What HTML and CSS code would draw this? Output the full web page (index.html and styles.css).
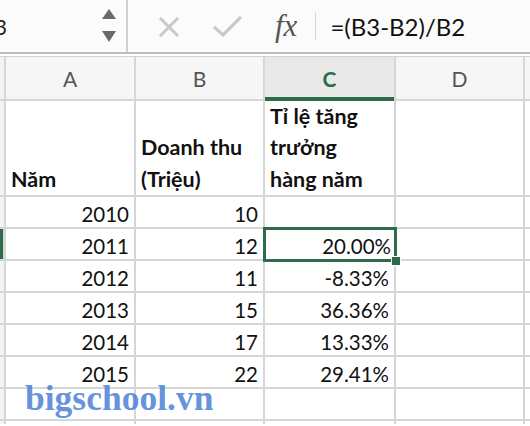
FILE: index.html
```html
<!doctype html>
<html>
  <head>
    <meta charset="utf-8">
    <link rel="stylesheet" href="styles.css">
  </head>
  <body>
    <div class="toolbar">
      <div class="name-box">
        <span class="ref">B3</span>
        <svg class="spin" width="14" height="34" viewBox="0 0 14 34">
          <path d="M7 0 L14 10 L0 10 Z" fill="#6a6a6a"/>
          <path d="M0 22 L14 22 L7 33 Z" fill="#6a6a6a"/>
        </svg>
      </div>
      <div class="actions">
        <svg class="cancel" width="22" height="20" viewBox="0 0 22 20">
          <path d="M2 1 L20 19 M20 1 L2 19" stroke="#c9c9c9" stroke-width="3" fill="none"/>
        </svg>
        <svg class="enter" width="29" height="21" viewBox="0 0 29 21">
          <path d="M1 11 L10 19 L28 1" stroke="#c9c9c9" stroke-width="3.2" fill="none"/>
        </svg>
        <span class="fx">fx</span>
      </div>
      <div class="formula">=(B3-B2)/B2</div>
    </div>
    <div class="toolbar-rule"></div>

    <div class="sheet">
      <div class="rh corner"></div>
      <div class="ch">A</div>
      <div class="ch">B</div>
      <div class="ch active">C</div>
      <div class="ch">D</div>
      <div class="ch"></div>

      <div class="rh"></div>
      <div class="cell head">Năm</div>
      <div class="cell head">Doanh thu<br>(Triệu)</div>
      <div class="cell head">Tỉ lệ tăng<br>trưởng<br>hàng năm</div>
      <div class="cell"></div>
      <div class="cell"></div>

      <div class="rh"></div>
      <div class="cell num">2010</div>
      <div class="cell num">10</div>
      <div class="cell num"></div>
      <div class="cell"></div>
      <div class="cell"></div>

      <div class="rh active"></div>
      <div class="cell num">2011</div>
      <div class="cell num">12</div>
      <div class="cell num selected">20.00%</div>
      <div class="cell"></div>
      <div class="cell"></div>

      <div class="rh"></div>
      <div class="cell num">2012</div>
      <div class="cell num">11</div>
      <div class="cell num">-8.33%</div>
      <div class="cell"></div>
      <div class="cell"></div>

      <div class="rh"></div>
      <div class="cell num">2013</div>
      <div class="cell num">15</div>
      <div class="cell num">36.36%</div>
      <div class="cell"></div>
      <div class="cell"></div>

      <div class="rh"></div>
      <div class="cell num">2014</div>
      <div class="cell num">17</div>
      <div class="cell num">13.33%</div>
      <div class="cell"></div>
      <div class="cell"></div>

      <div class="rh"></div>
      <div class="cell num">2015</div>
      <div class="cell num">22</div>
      <div class="cell num">29.41%</div>
      <div class="cell"></div>
      <div class="cell"></div>

      <div class="rh"></div>
      <div class="cell"></div>
      <div class="cell"></div>
      <div class="cell"></div>
      <div class="cell"></div>
      <div class="cell"></div>

      <div class="rh"></div>
      <div class="cell"></div>
      <div class="cell"></div>
      <div class="cell"></div>
      <div class="cell"></div>
      <div class="cell"></div>
    </div>

    <div class="watermark">bigschool.vn</div>
  </body>
</html>
```

FILE: styles.css
```css
html, body {
  margin: 0;
  padding: 0;
  width: 100%;
  height: 100%;
  overflow: hidden;
  background: #fff;
  font-family: Lato, "Open Sans", sans-serif;
  color: #111;
}

/* formula bar */
.toolbar {
  height: 52px;
  display: flex;
  align-items: center;
  background: #fbfbfb;
  border-bottom: 2px solid #bdbdbd;
}

.name-box {
  width: 126px;
  height: 52px;
  display: flex;
  align-items: center;
  border-right: 2px solid #cfcfcf;
  overflow: hidden;
}

.name-box .ref {
  margin-left: -20px;
  font-size: 22px;
  color: #222;
}

.name-box .spin {
  margin-left: auto;
  margin-right: 10px;
}

.actions {
  display: flex;
  align-items: center;
  height: 52px;
  padding-left: 30px;
}

.actions .cancel {
  margin-top: 2px;
}

.actions .enter {
  margin-left: 33px;
}

.actions .fx {
  margin-left: 33px;
  padding-right: 18px;
  border-right: 1px solid #d8d8d8;
  font-family: "Liberation Serif", serif;
  font-style: italic;
  font-size: 31px;
  line-height: 28px;
  color: #555;
}

.formula {
  padding-left: 14px;
  font-size: 24px;
  color: #111;
}

.toolbar-rule {
  height: 2px;
  border-bottom: 1px solid #d2d2d2;
  background: #fff;
}

/* grid */
.sheet {
  display: grid;
  grid-template-columns: 4px 128px 127px 129px 127px 1fr;
  grid-template-rows: 42px 94px repeat(7, 30px) 3px;
  gap: 2px;
  background: #d6d6d6;
}

.rh {
  background: #f3f3f3;
}

.rh.active {
  background: #2c6c4a;
  margin-right: 1px;
}

.ch {
  background: #f6f6f6;
  display: flex;
  align-items: center;
  justify-content: center;
  font-size: 21px;
  color: #555;
}

.ch.active {
  background: #e9e9e9;
  color: #2c6c4a;
  font-weight: 700;
  box-shadow: inset 0 -2px 0 #2c6c4a, 0 2px 0 #2c6c4a;
}

.cell {
  background: #fff;
  font-size: 20.5px;
  line-height: 31.5px;
  padding: 0 6px;
  display: flex;
  align-items: flex-end;
}

.cell.head {
  font-weight: 700;
  font-size: 21.5px;
  line-height: 31.5px;
  padding-left: 5px;
}

.cell.num {
  justify-content: flex-end;
  padding-right: 5px;
  line-height: 26px;
}

.cell.selected {
  position: relative;
  padding-right: 3px;
}

.cell.selected::after {
  content: "";
  position: absolute;
  top: -2px;
  left: -2px;
  right: -3px;
  bottom: -3px;
  border: 3px solid #2c6c4a;
}

.cell.selected::before {
  content: "";
  position: absolute;
  right: -7px;
  bottom: -7px;
  width: 8px;
  height: 8px;
  background: #2c6c4a;
  border: 1px solid #fff;
  z-index: 1;
}

.watermark {
  position: absolute;
  left: 25px;
  top: 377px;
  font-family: "Liberation Serif", serif;
  font-weight: 700;
  font-size: 35.5px;
  color: rgba(74, 128, 214, 0.85);
}
```
